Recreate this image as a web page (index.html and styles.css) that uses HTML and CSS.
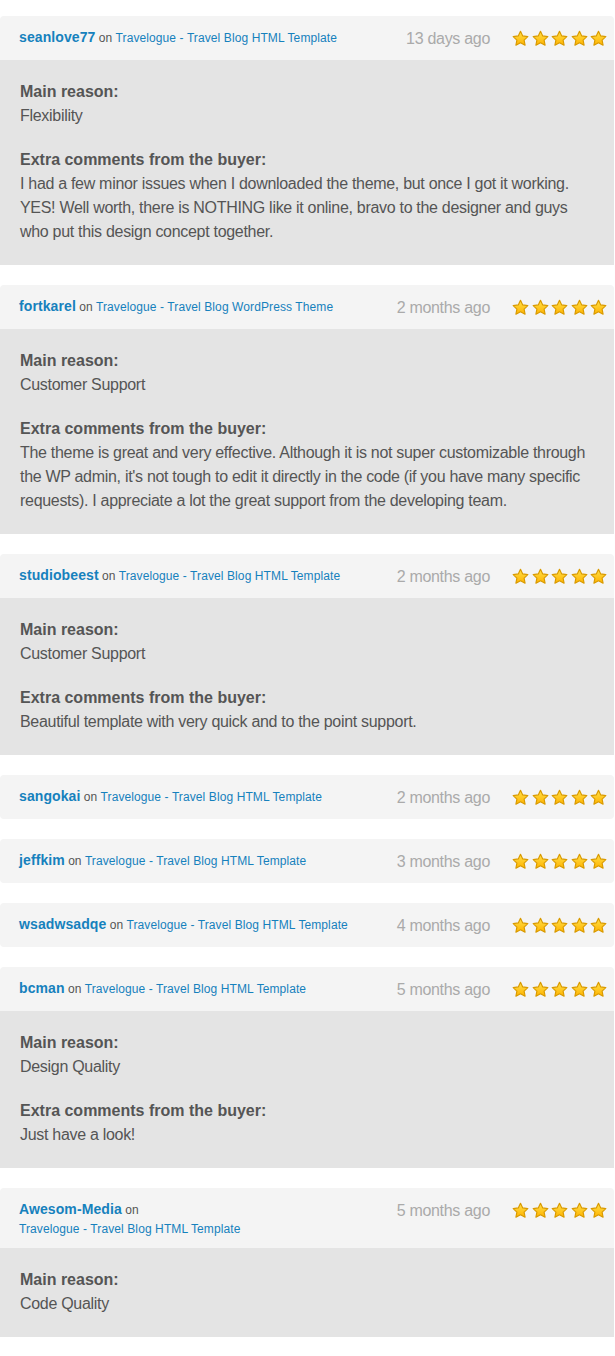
FILE: index.html
```html
<!DOCTYPE html>
<html>
<head>
<meta charset="utf-8">
<link rel="stylesheet" href="styles.css">
</head>
<body>
<svg width="0" height="0" class="defs">
  <defs>
    <linearGradient id="sg" x1="0" y1="0" x2="0" y2="1">
      <stop offset="0" stop-color="#ffe14a"/>
      <stop offset="1" stop-color="#ffb300"/>
    </linearGradient>
    <symbol id="star" viewBox="0 0 16 16">
      <path d="M8 1.2 L10.1 5.6 L14.9 6.2 L11.4 9.5 L12.3 14.3 L8 12 L3.7 14.3 L4.6 9.5 L1.1 6.2 L5.9 5.6 Z" fill="url(#sg)" stroke="#d99a00" stroke-width="1.1" stroke-linejoin="round"/>
    </symbol>
  </defs>
</svg>

<div class="list">

  <div class="card">
    <div class="head">
      <div class="who"><a class="user">seanlove77</a> <span class="on">on</span> <a class="item">Travelogue - Travel Blog HTML Template</a></div>
      <div class="time">13 days ago</div>
      <div class="stars"><svg><use href="#star"/></svg><svg><use href="#star"/></svg><svg><use href="#star"/></svg><svg><use href="#star"/></svg><svg><use href="#star"/></svg></div>
    </div>
    <div class="body">
      <p><b>Main reason:</b><br>Flexibility</p>
      <p><b>Extra comments from the buyer:</b><br>I had a few minor issues when I downloaded the theme, but once I got it working. YES! Well worth, there is NOTHING like it online, bravo to the designer and guys who put this design concept together.</p>
    </div>
  </div>

  <div class="card">
    <div class="head">
      <div class="who"><a class="user">fortkarel</a> <span class="on">on</span> <a class="item">Travelogue - Travel Blog WordPress Theme</a></div>
      <div class="time">2 months ago</div>
      <div class="stars"><svg><use href="#star"/></svg><svg><use href="#star"/></svg><svg><use href="#star"/></svg><svg><use href="#star"/></svg><svg><use href="#star"/></svg></div>
    </div>
    <div class="body">
      <p><b>Main reason:</b><br>Customer Support</p>
      <p><b>Extra comments from the buyer:</b><br>The theme is great and very effective. Although it is not super customizable through the WP admin, it's not tough to edit it directly in the code (if you have many specific requests). I appreciate a lot the great support from the developing team.</p>
    </div>
  </div>

  <div class="card">
    <div class="head">
      <div class="who"><a class="user">studiobeest</a> <span class="on">on</span> <a class="item">Travelogue - Travel Blog HTML Template</a></div>
      <div class="time">2 months ago</div>
      <div class="stars"><svg><use href="#star"/></svg><svg><use href="#star"/></svg><svg><use href="#star"/></svg><svg><use href="#star"/></svg><svg><use href="#star"/></svg></div>
    </div>
    <div class="body">
      <p><b>Main reason:</b><br>Customer Support</p>
      <p><b>Extra comments from the buyer:</b><br>Beautiful template with very quick and to the point support.</p>
    </div>
  </div>

  <div class="card solo">
    <div class="head">
      <div class="who"><a class="user">sangokai</a> <span class="on">on</span> <a class="item">Travelogue - Travel Blog HTML Template</a></div>
      <div class="time">2 months ago</div>
      <div class="stars"><svg><use href="#star"/></svg><svg><use href="#star"/></svg><svg><use href="#star"/></svg><svg><use href="#star"/></svg><svg><use href="#star"/></svg></div>
    </div>
  </div>

  <div class="card solo">
    <div class="head">
      <div class="who"><a class="user">jeffkim</a> <span class="on">on</span> <a class="item">Travelogue - Travel Blog HTML Template</a></div>
      <div class="time">3 months ago</div>
      <div class="stars"><svg><use href="#star"/></svg><svg><use href="#star"/></svg><svg><use href="#star"/></svg><svg><use href="#star"/></svg><svg><use href="#star"/></svg></div>
    </div>
  </div>

  <div class="card solo">
    <div class="head">
      <div class="who"><a class="user">wsadwsadqe</a> <span class="on">on</span> <a class="item">Travelogue - Travel Blog HTML Template</a></div>
      <div class="time">4 months ago</div>
      <div class="stars"><svg><use href="#star"/></svg><svg><use href="#star"/></svg><svg><use href="#star"/></svg><svg><use href="#star"/></svg><svg><use href="#star"/></svg></div>
    </div>
  </div>

  <div class="card">
    <div class="head">
      <div class="who"><a class="user">bcman</a> <span class="on">on</span> <a class="item">Travelogue - Travel Blog HTML Template</a></div>
      <div class="time">5 months ago</div>
      <div class="stars"><svg><use href="#star"/></svg><svg><use href="#star"/></svg><svg><use href="#star"/></svg><svg><use href="#star"/></svg><svg><use href="#star"/></svg></div>
    </div>
    <div class="body">
      <p><b>Main reason:</b><br>Design Quality</p>
      <p><b>Extra comments from the buyer:</b><br>Just have a look!</p>
    </div>
  </div>

  <div class="card">
    <div class="head">
      <div class="who"><a class="user">Awesom-Media</a> <span class="on">on</span> <a class="item">Travelogue - Travel Blog HTML Template</a></div>
      <div class="time">5 months ago</div>
      <div class="stars"><svg><use href="#star"/></svg><svg><use href="#star"/></svg><svg><use href="#star"/></svg><svg><use href="#star"/></svg><svg><use href="#star"/></svg></div>
    </div>
    <div class="body">
      <p><b>Main reason:</b><br>Code Quality</p>
    </div>
  </div>

</div>
</body>
</html>
```

FILE: styles.css
```css
html, body {
  margin: 0;
  padding: 0;
  background: #ffffff;
}

body {
  font-family: "Liberation Sans", Arial, sans-serif;
  color: #555555;
}

.defs {
  position: absolute;
  width: 0;
  height: 0;
  overflow: hidden;
}

.list {
  display: flex;
  flex-direction: column;
  gap: 20px;
  padding-top: 16px;
  width: 614px;
}

.card {
  border-radius: 4px 4px 0 0;
  overflow: hidden;
}

.card.solo {
  border-radius: 4px;
}

.head {
  display: flex;
  align-items: flex-start;
  background: #f4f4f4;
  padding: 11px 7px 10px 19px;
}

.who {
  width: 340px;
  line-height: 19px;
  font-size: 12px;
  padding-top: 1px;
  margin-bottom: -1px;
}

.user {
  font-size: 14px;
  font-weight: bold;
  letter-spacing: 0.1px;
  color: #1681bd;
}

.on {
  color: #555555;
}

.item {
  color: #1681bd;
  letter-spacing: 0.1px;
  white-space: nowrap;
}

.time {
  flex: 1;
  text-align: right;
  font-size: 16px;
  line-height: 23px;
  letter-spacing: -0.3px;
  color: #aaaaaa;
}

.stars {
  display: flex;
  gap: 2.5px;
  margin-left: 22px;
  padding-top: 3px;
}

.stars svg {
  width: 17px;
  height: 17px;
  display: block;
}

.body {
  background: #e4e4e4;
  padding: 20px 20px 21px;
  font-size: 16px;
  line-height: 24px;
  letter-spacing: -0.3px;
}

.body p {
  margin: 0 0 20px 0;
}

.body p:last-child {
  margin-bottom: 0;
}

.body b {
  color: #555555;
  letter-spacing: 0;
}
```
